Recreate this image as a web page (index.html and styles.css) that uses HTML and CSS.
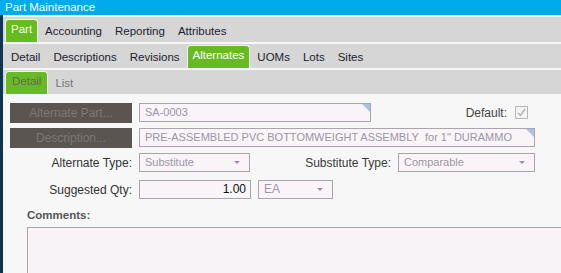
FILE: index.html
```html
<!DOCTYPE html>
<html lang="en">
<head>
    <meta charset="UTF-8">
    <meta name="viewport" content="width=device-width, initial-scale=1.0">
    <title>Part Maintenance</title>
    <link rel="stylesheet" href="styles.css">
</head>
<body>
    <div class="titlebar">Part Maintenance</div>

    <div class="frame">
        <nav class="tabs">
            <span class="tab active">Part</span>
            <span class="tab">Accounting</span>
            <span class="tab">Reporting</span>
            <span class="tab">Attributes</span>
        </nav>

        <nav class="tabs">
            <span class="tab">Detail</span>
            <span class="tab">Descriptions</span>
            <span class="tab">Revisions</span>
            <span class="tab active">Alternates</span>
            <span class="tab">UOMs</span>
            <span class="tab">Lots</span>
            <span class="tab">Sites</span>
        </nav>

        <nav class="tabs tabs-view">
            <span class="tab active">Detail</span>
            <span class="tab">List</span>
        </nav>

        <form class="alt-form">
            <div class="row">
                <button type="button" class="lookup">Alternate Part...</button>
                <div class="field field-part corner">SA-0003</div>
                <span class="label label-default">Default:</span>
                <span class="check">
                    <svg width="11" height="11" viewBox="0 0 11 11"><polyline points="2,6 4.5,8.5 9,2" fill="none" stroke="#b4b0b4" stroke-width="1.4"/></svg>
                </span>
            </div>

            <div class="row">
                <button type="button" class="lookup">Description...</button>
                <div class="field field-desc corner">PRE-ASSEMBLED PVC BOTTOMWEIGHT ASSEMBLY&nbsp; for 1" DURAMMO</div>
            </div>

            <div class="row row-types">
                <span class="label label-col">Alternate Type:</span>
                <div class="field select select-alt">Substitute</div>
                <span class="label label-sub">Substitute Type:</span>
                <div class="field select select-sub">Comparable</div>
            </div>

            <div class="row row-qty">
                <span class="label label-col">Suggested Qty:</span>
                <div class="field field-qty">1.00</div>
                <div class="field select select-uom">EA</div>
            </div>

            <div class="comments-label">Comments:</div>
            <div class="comments"></div>
        </form>
    </div>
</body>
</html>
```

FILE: styles.css
```css
body {
    margin: 0;
    background-color: #f7f7f7;
    font-family: 'Liberation Sans', Arial, sans-serif;
    font-size: 12px;
    color: #333;
    height: 273px;
    overflow: hidden;
}

.titlebar {
    background-color: #00aaeb;
    color: #fff;
    font-size: 11.5px;
    height: 15px;
    line-height: 14px;
    padding-left: 5px;
}

.frame {
    border-left: 3px solid #0e3552;
    padding-top: 2px;
    background-color: #f7f7f7;
    height: 256px;
    overflow: hidden;
}

.tabs {
    display: flex;
    align-items: flex-end;
    background-color: #d6d6d6;
    height: 24px;
    margin-bottom: 2px;
    padding-left: 2px;
}

.tabs:first-child {
    height: 25px;
}

.tab {
    font-size: 11.5px;
    color: #1c1c2c;
    padding: 0 5px;
    margin-right: 1px;
    height: 23px;
    line-height: 23px;
    border: 1px solid transparent;
    border-bottom: none;
    box-sizing: border-box;
}

.tab.active {
    background-color: #66bb22;
    color: #fff;
    border-color: #eaf6e2;
    border-radius: 4px 4px 0 0;
    line-height: 19px;
}

.tabs-view .tab {
    color: #777;
}

.tabs-view .tab.active {
    color: #666;
    padding: 0 6px;
}

.alt-form {
    padding: 7px 0 0 7px;
}

.row {
    display: flex;
    align-items: center;
    gap: 7px;
    height: 19px;
    margin-bottom: 6px;
}

.row-types {
    margin-bottom: 8px;
}

.lookup {
    width: 122px;
    height: 20px;
    background-color: #5a5550;
    color: #7e7874;
    border: none;
    font-family: 'Liberation Sans', Arial, sans-serif;
    font-size: 12px;
    padding: 0;
}

.field {
    position: relative;
    height: 19px;
    line-height: 17px;
    box-sizing: border-box;
    border: 1px solid #aaa4ac;
    background-color: #f8f4f8;
    color: #9e95a6;
    font-size: 11px;
    padding: 0 5px;
    white-space: nowrap;
}

.corner::after {
    content: "";
    position: absolute;
    top: 0;
    right: 0;
    border-top: 8px solid #a9c3e2;
    border-left: 8px solid transparent;
}

.field-part {
    width: 232px;
}

.field-desc {
    width: 396px;
}

.label {
    color: #333;
}

.label-col {
    width: 122px;
    text-align: right;
}

.label-default {
    margin-left: auto;
    margin-right: 1px;
    color: #444;
}

.check {
    width: 13px;
    height: 13px;
    box-sizing: border-box;
    border: 1px solid #b8b4b8;
    background-color: #f4f4f4;
    margin-right: 33px;
    display: flex;
    align-items: center;
    justify-content: center;
}

.select::after {
    content: "";
    position: absolute;
    right: 9px;
    top: 7px;
    border-top: 3px solid #a88aa8;
    border-left: 3px solid transparent;
    border-right: 3px solid transparent;
}

.select-alt {
    width: 111px;
}

.label-sub {
    width: 134px;
    text-align: right;
    color: #3a3a3a;
}

.select-sub {
    width: 137px;
}

.field-qty {
    width: 112px;
    text-align: right;
    color: #111;
    font-size: 12px;
    padding-right: 4px;
}

.select-uom {
    width: 75px;
    font-size: 12px;
}

.comments-label {
    font-weight: bold;
    color: #555;
    margin: 10px 0 0 17px;
    font-size: 11.5px;
}

.comments {
    margin: 6px 0 0 17px;
    height: 60px;
    border: 1px solid #aaa4aa;
    border-right: none;
    background-color: #f7f3f7;
}
```
